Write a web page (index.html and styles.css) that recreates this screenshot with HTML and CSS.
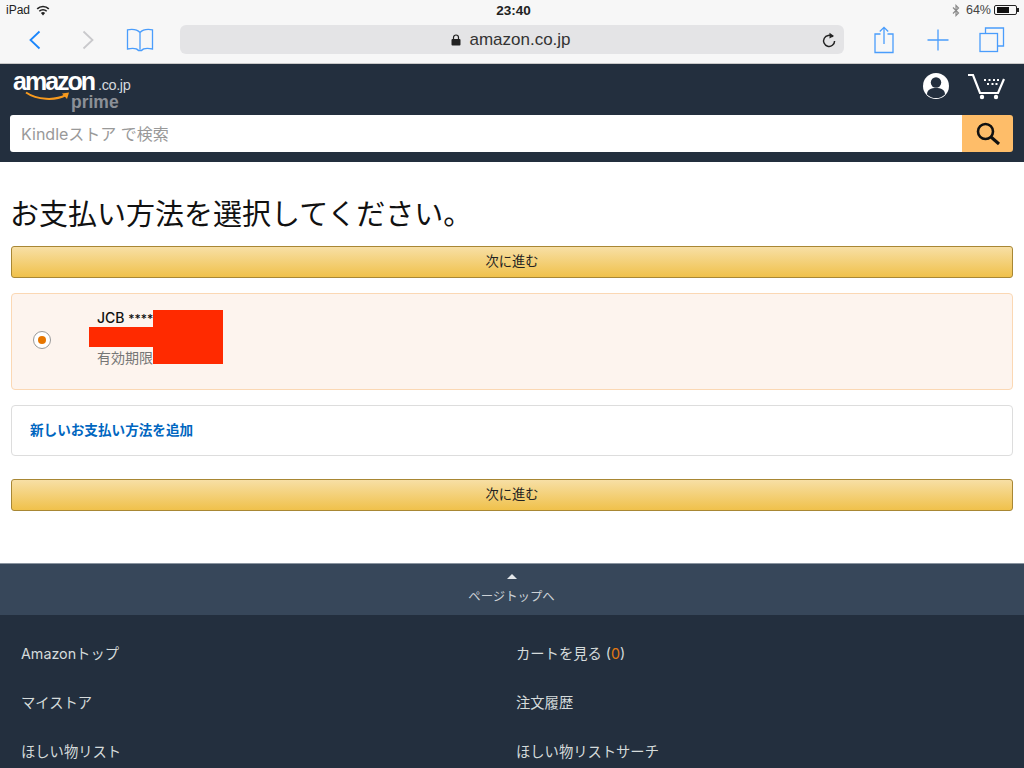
FILE: index.html
```html
<!DOCTYPE html>
<html lang="ja">
<head>
<meta charset="utf-8">
<title>お支払い方法を選択</title>
<link rel="stylesheet" href="styles.css">
</head>
<body>
<div class="statusbar">
  <div class="st-left"><span>iPad</span>
    <svg class="wifi" width="14" height="11" viewBox="0 0 14 11"><path d="M7 10.500 4.900 8.100a3 3 0 0 1 4.200 0z" fill="#222"/><path d="M3.300 6.300a5.300 5.300 0 0 1 7.400 0M1.200 3.900a8.200 8.200 0 0 1 11.600 0" fill="none" stroke="#222" stroke-width="1.600"/></svg>
  </div>
  <div class="st-time">23:40</div>
  <div class="st-right">
    <svg width="8" height="13" viewBox="0 0 8 13"><path d="M1 3.500 6.500 9 4 11.500v-10L6.500 4 1 9.500" fill="none" stroke="#8a8a8a" stroke-width="1.200"/></svg>
    <span>64%</span>
    <span class="battery"><span class="battery-fill"></span></span><span class="battery-tip"></span>
  </div>
</div>
<div class="toolbar">
  <svg class="tb-back" width="14" height="20" viewBox="0 0 14 20"><path d="M11.500 1.500 2.500 10l9 8.500" fill="none" stroke="#1b86fb" stroke-width="1.800"/></svg>
  <svg class="tb-fwd" width="14" height="20" viewBox="0 0 14 20"><path d="M2.500 1.500 11.500 10l-9 8.500" fill="none" stroke="#c9c9cc" stroke-width="1.800"/></svg>
  <svg class="tb-book" width="28" height="24" viewBox="0 0 28 24"><path d="M14 4.500C11.500 1.800 6 1 1.500 1.800V21c4.500-.8 9.500-.5 11 1.500h3c1.500-2 6.500-2.300 11-1.500V1.800C22 1 16.500 1.800 14 4.500zM14 4.500V21.500" fill="none" stroke="#4a9dfc" stroke-width="1.300"/></svg>
  <div class="urlbar">
    <div class="url-center">
      <svg width="10" height="12" viewBox="0 0 10 12"><path d="M2.500 5V3.500a2.500 2.500 0 0 1 5 0V5" fill="none" stroke="#222" stroke-width="1.200"/><rect x="0.500" y="5" width="9" height="6.500" rx="1" fill="#222"/></svg>
      <span>amazon.co.jp</span>
    </div>
    <svg class="reload" width="14" height="16" viewBox="0 0 14 16"><path d="M10.800 4.800a5.500 5.500 0 1 0 1.800 4.200" fill="none" stroke="#222" stroke-width="1.500"/><path d="M7.500 0.800 12 4 7.500 6.500z" fill="#222"/></svg>
  </div>
  <div class="tb-actions">
    <svg width="20" height="28" viewBox="0 0 20 28"><path d="M6.500 8H1v18.500h18V8h-5.500M10 18V1.500M5.800 5.500 10 1.300l4.200 4.200" fill="none" stroke="#4a9dfc" stroke-width="1.300"/></svg>
    <svg class="tb-plus" width="22" height="22" viewBox="0 0 22 22"><path d="M11 0.500v21M0.500 11h21" fill="none" stroke="#4a9dfc" stroke-width="1.300"/></svg>
    <svg class="tb-tabs" width="26" height="26" viewBox="0 0 26 26"><path d="M6.500 6V1h18v18h-6" fill="none" stroke="#4a9dfc" stroke-width="1.300"/><rect x="1" y="6.500" width="17.500" height="18" fill="none" stroke="#4a9dfc" stroke-width="1.300"/></svg>
  </div>
</div>

<header class="amz-header">
  <div class="amz-top">
    <div class="logo">
      <div class="logo-line"><span class="logo-amazon">amazon</span><span class="logo-co">.co.jp</span></div>
      <svg class="swoosh" width="46" height="11" viewBox="0 0 46 11"><path d="M1 1.500C12 9 30 10 41 4" fill="none" stroke="#f79a1e" stroke-width="2"/><path d="M37 2.500 44 1.500 42 8z" fill="#f79a1e"/></svg>
      <span class="logo-prime">prime</span>
    </div>
    <div class="amz-icons">
      <svg width="28" height="28" viewBox="0 0 28 28"><circle cx="14" cy="14" r="13" fill="#fff"/><circle cx="14" cy="10.500" r="5.200" fill="#232f3e"/><path d="M5 22.500c0-5 4-6.500 9-6.500s9 1.500 9 6.500A13 13 0 0 1 5 22.500z" fill="#232f3e"/></svg>
      <svg width="38" height="28" viewBox="0 0 38 28"><path d="M1 3h5l7 18h18l6-14" fill="none" stroke="#fff" stroke-width="2.200"/><path d="M17 8h2M21.500 8h2M26 8h2M30 8h2M20 12h2M24.500 12h2M28.500 12h2" stroke="#fff" stroke-width="1.800"/><circle cx="15" cy="25" r="2.200" fill="#fff"/><circle cx="29" cy="25" r="2.200" fill="#fff"/></svg>
    </div>
  </div>
  <div class="search">
    <div class="search-input">Kindleストア で検索</div>
    <div class="search-btn">
      <svg width="26" height="26" viewBox="0 0 26 26"><circle cx="10.500" cy="10.500" r="7.500" fill="none" stroke="#111" stroke-width="2.600"/><path d="M16 16l8 7" stroke="#111" stroke-width="3"/></svg>
    </div>
  </div>
</header>

<main class="content">
  <h1 class="title">お支払い方法を選択してください。</h1>
  <button class="cta"><span class="cta-label">次に進む</span></button>
  <div class="card card-selected">
    <span class="radio"><span class="radio-dot"></span></span>
    <div class="card-info">
      <div class="card-name">JCB <span class="card-num">****</span></div>
      <div class="card-exp">有効期限:</div>
    </div>
    <span class="redact redact-a"></span>
    <span class="redact redact-b"></span>
  </div>
  <div class="card card-add"><a class="add-link">新しいお支払い方法を追加</a></div>
  <button class="cta"><span class="cta-label">次に進む</span></button>
</main>

<div class="to-top">
  <span class="to-top-arrow"></span>
  <span>ページトップへ</span>
</div>
<footer class="amz-footer">
  <a>Amazonトップ</a><a>カートを見る (<span class="count">0</span>)</a>
  <a>マイストア</a><a>注文履歴</a>
  <a>ほしい物リスト</a><a>ほしい物リストサーチ</a>
</footer>
</body>
</html>
```
FILE: styles.css
```css
* { box-sizing: border-box; }
html, body { margin: 0; padding: 0; }
body {
  width: 1024px;
  height: 768px;
  overflow: hidden;
  background: #fff;
  color: #111;
  font-family: "Liberation Sans", "Noto Sans CJK JP", sans-serif;
}
.statusbar {
  height: 20px;
  background: #f7f7f7;
  display: grid;
  grid-template-columns: 1fr auto 1fr;
  align-items: center;
  padding: 0 5px 0 6px;
  font-size: 12px;
  color: #222;
}
.st-left { display: flex; align-items: center; gap: 6px; }
.st-time { font-weight: 700; font-size: 13.500px; margin-left: 2px; }
.st-right { display: flex; align-items: center; justify-content: flex-end; gap: 5px; color: #444; font-size: 12.500px; }
.st-right span:first-of-type { margin-left: 1px; margin-right: -1px; }
.battery { width: 23px; height: 10px; border: 1px solid #222; border-radius: 2px; padding: 1px; display: block; margin-left: -1px; }
.battery-fill { display: block; height: 100%; width: 64%; background: #111; }
.battery-tip { width: 2px; height: 4px; background: #222; margin-left: -5px; }
.toolbar {
  height: 44px;
  background: #f7f7f7;
  border-bottom: 1px solid #c9c9c9;
  display: flex;
  align-items: center;
  padding: 0 0 4px 28px;
}
.tb-fwd { margin-left: 39px; }
.tb-book { margin-left: 31px; }
.urlbar {
  margin-left: 26px;
  width: 664px;
  height: 29px;
  background: #e4e4e6;
  border-radius: 6px;
  position: relative;
  display: flex;
  align-items: center;
  justify-content: center;
}
.url-center { display: flex; align-items: center; gap: 8px; font-size: 17px; color: #333; margin-left: -2px; }
.reload { position: absolute; right: 8px; top: 7px; }
.tb-actions { display: flex; align-items: center; margin-left: 30px; }
.tb-plus { margin-left: 33px; }
.tb-tabs { margin-left: 30px; }

.amz-header { height: 98px; background: #232f3e; padding: 0 10px 0 10px; }
.amz-top { height: 51px; display: flex; justify-content: space-between; align-items: flex-start; }
.logo { position: relative; width: 125px; height: 51px; padding: 5px 0 0 3px; }
.logo-line { display: flex; align-items: baseline; color: #fff; line-height: 24px; height: 24px; }
.logo-amazon { font-size: 25px; font-weight: 700; letter-spacing: -2px; }
.logo-co { font-size: 14.500px; color: #d5d8dc; margin-left: 4px; letter-spacing: -0.400px; }
.swoosh { position: absolute; left: 15px; top: 27px; }
.logo-prime { position: absolute; left: 61px; top: 30px; font-size: 17.500px; font-weight: 700; line-height: 16px; color: #8b9097; }
.amz-icons { display: flex; align-items: flex-start; gap: 17px; padding: 8px 9px 0 0; }
.search { height: 37px; display: flex; border-radius: 3px; overflow: hidden; width: 1003px; }
.search-input { flex: 1; background: #fff; font-size: 16px; color: #999; display: flex; align-items: center; padding: 0 0 2px 11px; font-family: Inter, "Noto Sans CJK JP", sans-serif; }
.search-btn { width: 51px; background: #febd69; display: flex; align-items: center; justify-content: center; }

.content { padding: 0 11px 0 11px; height: 401px; }
.title { margin: 0 0 0 -1px; height: 84px; font-size: 29px; font-weight: 400; line-height: 32px; padding-top: 37px; color: #111; }
.cta {
  display: block;
  width: 100%;
  height: 32px;
  border: 1px solid #a88734;
  border-radius: 3px;
  background: linear-gradient(#f7dfa5, #f0c14b);
  font: 13.300px "Liberation Sans", "Noto Sans CJK JP", sans-serif;
  color: #222;
  padding: 0;
}
.cta-label { position: relative; top: -2px; }
.card { border-radius: 4px; position: relative; display: flex; align-items: center; }
.card-selected { height: 97px; margin-top: 15px; background: #fdf4ee; border: 1px solid #fbd8b4; padding: 0 0 3px 21px; }
.radio { width: 18px; height: 18px; border-radius: 50%; border: 1px solid #999; background: #fff; display: flex; align-items: center; justify-content: center; }
.radio-dot { width: 8px; height: 8px; border-radius: 50%; background: #e77600; }
.card-info { margin: -5px 0 0 46px; display: flex; flex-direction: column; gap: 23px; }
.card-name { font-size: 14px; font-family: Inter, "Liberation Sans", sans-serif; font-weight: 500; color: #111; line-height: 17px; }
.card-num { font-size: 12px; }
.card-exp { font-size: 14px; color: #767676; line-height: 17px; }
.redact { position: absolute; background: #ff2a00; }
.redact-a { left: 141px; top: 16px; width: 70px; height: 54px; }
.redact-b { left: 77px; top: 33px; width: 134px; height: 20px; }
.card-add { height: 51px; margin: 15px 0 23px; background: #fff; border: 1px solid #ddd; padding: 0 0 3px 18px; }
.add-link { font-size: 13.600px; font-weight: 700; color: #0066c0; }

.to-top {
  height: 52px;
  background: #37475a;
  border-top: 1px solid #8a94a0;
  color: #ccd1d6;
  font-size: 12.400px;
  display: flex;
  flex-direction: column;
  align-items: center;
  padding: 10px 1px 0 0;
  gap: 8px;
}
.to-top-arrow { width: 0; height: 0; border-left: 5px solid transparent; border-right: 5px solid transparent; border-bottom: 5px solid #e4e7ea; }
.amz-footer {
  background: #232f3e;
  height: 153px;
  display: grid;
  grid-template-columns: 495px 1fr;
  grid-auto-rows: 49px;
  padding: 13px 21px 0;
  color: #d5dbdb;
  font-size: 14.300px;
  font-family: Inter, "Noto Sans CJK JP", sans-serif;
  align-items: center;
}
.count { color: #e47911; }
```
